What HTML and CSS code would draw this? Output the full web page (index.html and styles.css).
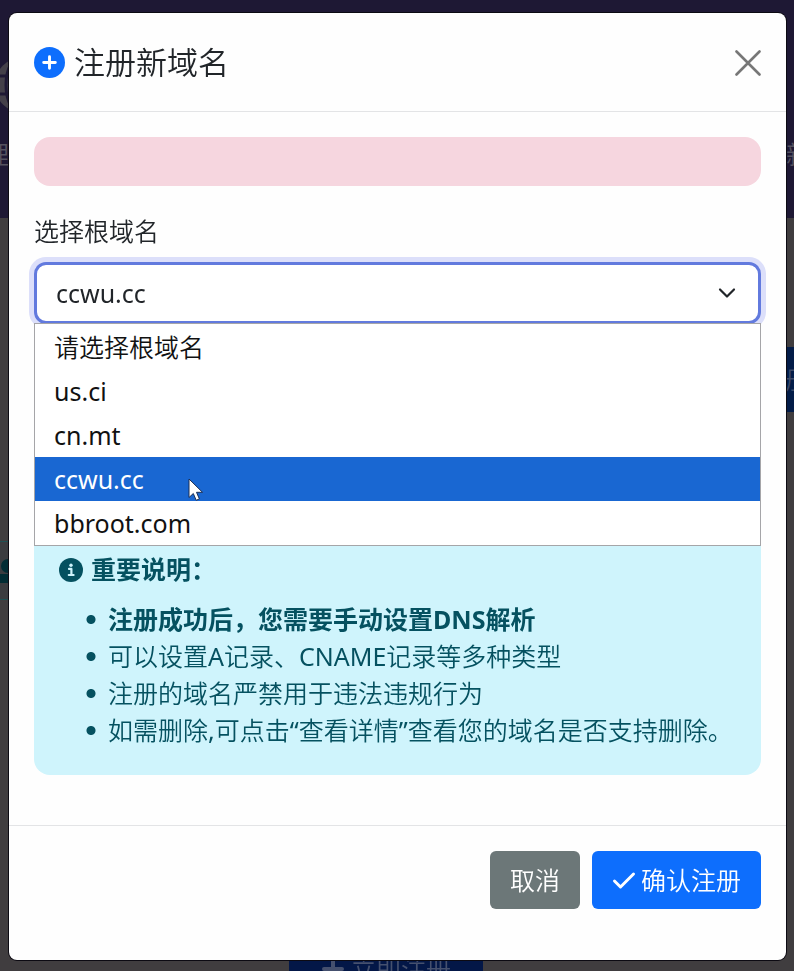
FILE: index.html
```html
<!DOCTYPE html>
<html lang="zh-CN">
<head>
    <meta charset="UTF-8">
    <meta name="viewport" content="width=device-width, initial-scale=1">
    <title>注册新域名</title>
    <link rel="stylesheet" href="styles.css">
</head>
<body>

    <!-- Page behind the dialog -->
    <div class="page" aria-hidden="true">
        <div class="hero">
            <svg class="hero-logo" viewBox="0 0 56 56">
                <circle cx="28" cy="28" r="28" fill="#444049"/>
                <path d="M0 19h56M0 37h56" stroke="#1e1834" stroke-width="3"/>
                <ellipse cx="28" cy="28" rx="17" ry="30" fill="none" stroke="#1e1834" stroke-width="3"/>
            </svg>
            <span class="hero-text hero-text-left">理</span>
            <span class="hero-text hero-text-right">新</span>
        </div>
        <div class="page-action">册</div>
        <div class="page-notice"><span class="notice-dot"></span><span class="notice-bar"></span></div>
        <div class="page-register">
            <svg class="icon" viewBox="0 0 24 24"><path d="M12 3v18M3 12h18" stroke="currentColor" stroke-width="4" stroke-linecap="round"/></svg>
            立即注册
        </div>
    </div>

    <div class="modal" role="dialog" aria-modal="true" aria-labelledby="modalTitle">
        <div class="modal-header">
            <h5 class="modal-title" id="modalTitle">
                <svg class="icon icon-title" viewBox="0 0 32 32" aria-hidden="true">
                    <circle cx="16" cy="16" r="16" fill="#0d6efd"/>
                    <path d="M16 10v12M10 16h12" stroke="#fff" stroke-width="3" stroke-linecap="round"/>
                </svg>
                <span>注册新域名</span>
            </h5>
            <button type="button" class="btn-close" aria-label="关闭">
                <svg viewBox="0 0 26 26" aria-hidden="true"><path d="M1.5 1.5l23 23M24.5 1.5l-23 23" stroke="currentColor" stroke-width="2.6" stroke-linecap="round"/></svg>
            </button>
        </div>

        <form class="modal-body">
            <div class="alert alert-danger" role="alert"></div>

            <label class="form-label" for="rootDomain">选择根域名</label>
            <div class="select-wrap">
                <select class="form-select" id="rootDomain" name="rootDomain">
                    <option value="">请选择根域名</option>
                    <option value="us.ci">us.ci</option>
                    <option value="cn.mt">cn.mt</option>
                    <option value="ccwu.cc" selected>ccwu.cc</option>
                    <option value="bbroot.com">bbroot.com</option>
                </select>
                <svg class="select-arrow" viewBox="0 0 18 18" aria-hidden="true"><path d="M2 5.5l7 7 7-7" fill="none" stroke="currentColor" stroke-width="2.2" stroke-linecap="round" stroke-linejoin="round"/></svg>

                <!-- Opened option list -->
                <ul class="select-menu" role="listbox" aria-label="选择根域名">
                    <li role="option">请选择根域名</li>
                    <li role="option">us.ci</li>
                    <li role="option">cn.mt</li>
                    <li role="option" class="active" aria-selected="true">ccwu.cc</li>
                    <li role="option">bbroot.com</li>
                </ul>
                <svg class="cursor" viewBox="0 0 16 24" aria-hidden="true"><path d="M1 1v18.5l4.3-4 2.9 6.8 3.2-1.4-2.9-6.6h6z" fill="#fff" stroke="#1b2f55" stroke-width="1" stroke-linejoin="round"/></svg>
            </div>

            <div class="alert alert-info">
                <p class="alert-heading">
                    <svg class="icon icon-info" viewBox="0 0 24 24" aria-hidden="true">
                        <circle cx="12" cy="12" r="12" fill="#055160"/>
                        <circle cx="12" cy="7.2" r="1.7" fill="#cff4fc"/>
                        <path d="M10 10.9h2.4v6M9.8 17h4.8" fill="none" stroke="#cff4fc" stroke-width="2.2" stroke-linecap="round" stroke-linejoin="round"/>
                    </svg>
                    <strong>重要说明：</strong>
                </p>
                <ul class="notes">
                    <li><strong>注册成功后，您需要手动设置DNS解析</strong></li>
                    <li>可以设置A记录、CNAME记录等多种类型</li>
                    <li>注册的域名严禁用于违法违规行为</li>
                    <li>如需删除,可点击“查看详情”查看您的域名是否支持删除。</li>
                </ul>
            </div>
        </form>

        <div class="modal-footer">
            <button type="button" class="btn btn-secondary">取消</button>
            <button type="button" class="btn btn-primary">
                <svg class="icon icon-check" viewBox="0 0 24 24" aria-hidden="true"><path d="M2.5 13l6 6L21.5 6" fill="none" stroke="currentColor" stroke-width="3" stroke-linecap="round" stroke-linejoin="round"/></svg>
                确认注册
            </button>
        </div>
    </div>

</body>
</html>
```
FILE: styles.css
```css
* {
    box-sizing: border-box;
}

body {
    margin: 0;
    min-height: 100vh;
    padding: 13px 8px 11px 9px;
    background-color: #403d3f;
    color: #212529;
    font-family: "Noto Sans", "Noto Sans CJK SC DemiLight", "Noto Sans CJK SC", sans-serif;
    font-size: 25px;
    line-height: 37px;
    overflow: hidden;
}

strong {
    font-family: "Noto Sans", "Noto Sans CJK SC", sans-serif;
    font-weight: 700;
}

/* Dimmed page */
.page {
    position: fixed;
    inset: 0;
    color: #55525f;
    overflow: hidden;
}

.hero {
    height: 218px;
    background-color: #1e1834;
}

.hero-logo {
    position: absolute;
    left: -5px;
    top: 57px;
    width: 56px;
    height: 56px;
}

.hero-text {
    position: absolute;
    top: 136px;
}

.hero-text-left {
    left: -16px;
}

.hero-text-right {
    right: -17px;
}

.page-action {
    position: absolute;
    right: -36px;
    top: 347px;
    height: 65px;
    padding: 14px 20px;
    background-color: #031c48;
    color: #3c4a68;
}

.page-notice {
    position: absolute;
    left: 0;
    top: 541px;
    width: 40px;
    height: 59px;
    border: 1px solid #1f5054;
    border-left: 0;
    background-color: #3b3c40;
}

.notice-dot,
.notice-bar {
    position: absolute;
    left: 1px;
    top: 17px;
    width: 20px;
    height: 14px;
    border-radius: 8px;
    background-color: #022c34;
}

.notice-bar {
    left: 0;
    top: 32px;
    height: 9px;
    border-radius: 0;
}

.page-register {
    position: absolute;
    left: 289px;
    top: 940px;
    display: flex;
    align-items: center;
    gap: 6px;
    height: 58px;
    padding: 0 32px;
    border-radius: 6px;
    background-color: #031747;
    color: #45506e;
}

/* Dialog */
.modal {
    position: relative;
    display: flex;
    flex-direction: column;
    min-height: calc(100vh - 24px);
    border-radius: 8px;
    background-color: #fefefe;
    box-shadow: 0 0 0 1px #0c0a12;
}

.modal-header {
    display: flex;
    align-items: center;
    justify-content: space-between;
    padding: 26px 25px 25px;
    border-bottom: 1px solid #e3e4e6;
}

.modal-title {
    display: flex;
    align-items: center;
    gap: 9px;
    margin: 0;
    font-size: 31px;
    font-weight: 400;
    line-height: 47px;
}

.icon {
    flex: none;
    width: 24px;
    height: 24px;
}

.icon-title {
    width: 31px;
    height: 31px;
}

.btn-close {
    padding: 0;
    border: 0;
    background: none;
    color: #777;
}

.btn-close svg {
    display: block;
    width: 26px;
    height: 26px;
}

.modal-body {
    flex: 1;
    padding: 25px;
}

.alert {
    border-radius: 16px;
}

.alert-danger {
    height: 49px;
    margin-bottom: 27px;
    background-color: #f6d6df;
}

.form-label {
    display: block;
    margin-bottom: 12px;
}

.select-wrap {
    position: relative;
    margin-bottom: 202px;
}

.form-select {
    display: block;
    width: 100%;
    height: 62px;
    padding: 0 54px 0 19px;
    border: 3px solid #627ade;
    border-radius: 12px;
    appearance: none;
    background-color: #fff;
    box-shadow: 0 0 0 5px #dcdffa;
    color: #212529;
    font: inherit;
}

.select-arrow {
    position: absolute;
    right: 25px;
    top: 22px;
    width: 18px;
    height: 18px;
    pointer-events: none;
}

.select-menu {
    position: absolute;
    left: 0;
    right: 0;
    top: 61px;
    margin: 0;
    padding: 1px 0 0;
    border: 1px solid #a5a5a8;
    background-color: #fff;
    color: #111;
    line-height: 44px;
    list-style: none;
}

.select-menu li {
    height: 44px;
    padding: 0 19px;
}

.select-menu .active {
    background-color: #1967d2;
    color: #fff;
}

.cursor {
    position: absolute;
    left: 154px;
    top: 216px;
    width: 16px;
    height: 24px;
}

.alert-info {
    padding: 25px 25px 26px;
    background-color: #cff4fc;
    color: #055160;
}

.alert-heading {
    display: flex;
    align-items: center;
    gap: 8px;
    margin: 0 0 13px;
}

.notes {
    margin: 0;
    padding-left: 49px;
    list-style: none;
}

/* round bullet, closer to the text than the default marker */
.notes li {
    padding-left: 25px;
    margin-left: -25px;
    background: radial-gradient(circle at 8px 50%, #055160 4px, transparent 5px);
}

/* Buttons */
.modal-footer {
    display: flex;
    justify-content: flex-end;
    gap: 12px;
    padding: 25px 25px 51px;
    border-top: 1px solid #e3e4e6;
}

.btn {
    display: flex;
    align-items: center;
    gap: 5px;
    height: 58px;
    padding: 0 20px;
    border: 0;
    border-radius: 6px;
    color: #fff;
    font: inherit;
}

.btn-secondary {
    background-color: #6c7778;
}

.btn-primary {
    background-color: #0d6efd;
}
```
